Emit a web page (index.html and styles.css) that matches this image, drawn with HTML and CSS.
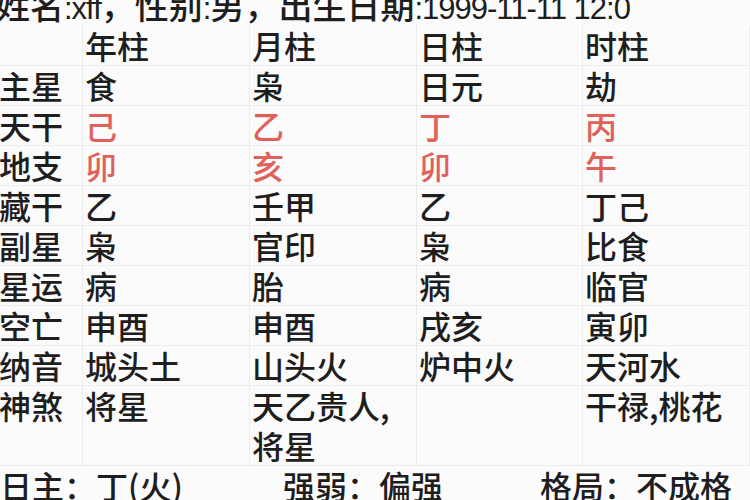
FILE: index.html
```html
<!DOCTYPE html>
<html lang="zh">
<head>
<meta charset="utf-8">
<link rel="stylesheet" href="styles.css">
</head>
<body>
<div class="page">
  <div class="info">姓名<span class="asc">:xff</span>，性别<span class="asc">:</span>男，出生日期<span class="asc">:1999-11-11 12:0</span></div>
  <div class="chart">
    <div class="cell label"></div><div class="cell">年柱</div><div class="cell">月柱</div><div class="cell">日柱</div><div class="cell">时柱</div>
    <div class="cell label">主星</div><div class="cell">食</div><div class="cell">枭</div><div class="cell">日元</div><div class="cell">劫</div>
    <div class="cell label">天干</div><div class="cell red">己</div><div class="cell red">乙</div><div class="cell red">丁</div><div class="cell red">丙</div>
    <div class="cell label">地支</div><div class="cell red">卯</div><div class="cell red">亥</div><div class="cell red">卯</div><div class="cell red">午</div>
    <div class="cell label">藏干</div><div class="cell">乙</div><div class="cell">壬甲</div><div class="cell">乙</div><div class="cell">丁己</div>
    <div class="cell label">副星</div><div class="cell">枭</div><div class="cell">官印</div><div class="cell">枭</div><div class="cell">比食</div>
    <div class="cell label">星运</div><div class="cell">病</div><div class="cell">胎</div><div class="cell">病</div><div class="cell">临官</div>
    <div class="cell label">空亡</div><div class="cell">申酉</div><div class="cell">申酉</div><div class="cell">戌亥</div><div class="cell">寅卯</div>
    <div class="cell label">纳音</div><div class="cell">城头土</div><div class="cell">山头火</div><div class="cell">炉中火</div><div class="cell">天河水</div>
    <div class="cell label">神煞</div><div class="cell">将星</div><div class="cell">天乙贵人,<br>将星</div><div class="cell"></div><div class="cell">干禄,桃花</div>
  </div>
  <div class="summary">
    <div class="item first">日主：丁(火)</div>
    <div class="item second">强弱：偏强</div>
    <div class="item third">格局：不成格</div>
  </div>
</div>
</body>
</html>
```

FILE: styles.css
```css
html, body {
  margin: 0;
  padding: 0;
  background: #fbfbfb;
  overflow: hidden;
}
.page {
  width: 750px;
  margin-top: -15px;
  font-family: "Noto Sans CJK SC", "Noto Sans", sans-serif;
  font-size: 32px;
  font-weight: 500;
  color: #1e1e1e;
}
.info {
  height: 40px;
  line-height: 40px;
  font-size: 34px;
  white-space: nowrap;
  margin-left: -4px;
}
.asc {
  letter-spacing: -1px;
  font-family: "Liberation Sans", sans-serif;
  font-size: 31px;
}
.chart {
  display: grid;
  grid-template-columns: 83px 167px 167px 166px 167px;
}
.cell {
  line-height: 40px;
  min-height: 40px;
  padding-left: 2px;
  border-right: 1px solid #ececec;
  border-bottom: 1px solid #ececec;
  margin-bottom: -1px;
  white-space: nowrap;
}
.cell.label {
  padding-left: 0;
  margin-left: -1px;
}
.red {
  color: #e0605a;
}
.summary {
  display: flex;
  height: 40px;
  line-height: 40px;
  white-space: nowrap;
}
.item.first { width: 283px; }
.item.second { width: 257px; }
```
